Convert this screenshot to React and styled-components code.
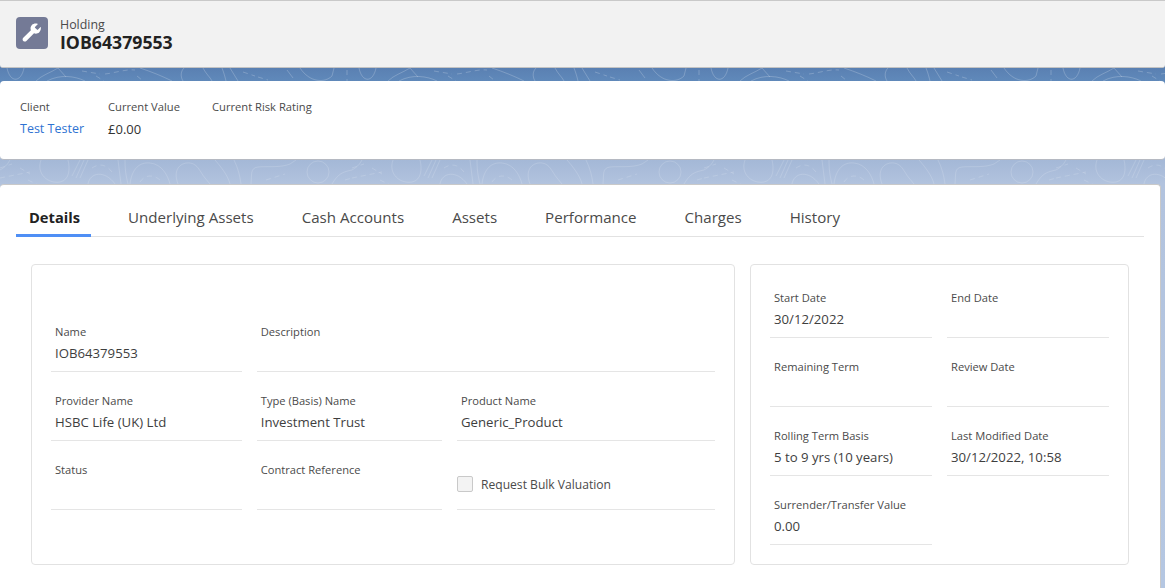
import React from "react";
import styled, { createGlobalStyle } from "styled-components";

const Global = createGlobalStyle`
  html, body { margin: 0; padding: 0; }
  body { font-family: "Open Sans", "Noto Sans", sans-serif; color: #181818; }
  * { box-sizing: border-box; }
`;

const Page = styled.div`
  width: 1165px;
  height: 588px;
  overflow: hidden;
  background: linear-gradient(180deg, #5a80b2 68px, #6089ba 81px, #a4b8d7 160px, #b2c3de 184px, #b5c7e2 588px);
  display: flex;
  flex-direction: column;
`;

const Header = styled.header`
  height: 68px;
  flex: none;
  background: #f2f2f2;
  border-top: 1px solid #c9c9c9;
  border-bottom: 1px solid #c4c4c4;
  border-radius: 0 0 3px 3px;
  padding: 16px 16px 0;
  display: flex;
  gap: 12px;
`;

const IconBox = styled.div`
  width: 32px;
  height: 32px;
  border-radius: 4px;
  background: #747a96;
  display: flex;
  align-items: center;
  justify-content: center;
`;

const HeaderText = styled.div`
  display: flex;
  flex-direction: column;
`;

const Entity = styled.div`
  font-size: 12.4px;
  line-height: 15px;
  color: #4a4a4a;
`;

const Title = styled.div`
  font-size: 17.7px;
  line-height: 20px;
  font-weight: 700;
  color: #222;
`;

const Band = styled.svg`
  display: block;
  flex: none;
  width: 1165px;
  height: ${(p) => p.$h}px;
`;

const Highlights = styled.section`
  height: 79px;
  flex: none;
  background: #fff;
  border-radius: 4px;
  border-bottom: 1px solid #b5b9c2;
  padding: 18px 20px 0;
  display: flex;
  gap: 24px;
`;

const Highlight = styled.div`
  display: flex;
  flex-direction: column;
  gap: 4px;
  padding-right: ${(p) => p.$pr || 0}px;
`;

const HighLabel = styled.div`
  font-size: 11.2px;
  line-height: 16px;
  color: #4a4a4a;
`;

const HighValue = styled.div`
  font-size: ${(p) => (p.$link ? 12.5 : 13)}px;
  line-height: 20px;
  color: ${(p) => (p.$link ? "#2e72d2" : "#333")};
`;

const Main = styled.main`
  width: 1161px;
  flex: 1;
  background: #fff;
  border-top: 1px solid #c9c9c9;
  border-right: 1px solid #c9c9c9;
  border-radius: 4px 4px 0 0;
  padding: 16px 16px 0;
`;

const Tabs = styled.nav`
  height: 36px;
  display: flex;
  border-bottom: 1px solid #e2e2e2;
`;

const Tab = styled.div`
  height: 36px;
  padding: 0 24px 4px;
  display: flex;
  align-items: center;
  font-size: 15.1px;
  line-height: 20px;
  color: #4a4a4a;
`;

const ActiveTab = styled(Tab)`
  width: 75px;
  padding: 0 0 1px 13px;
  margin-right: 13px;
  font-size: 14.7px;
  font-weight: 700;
  color: #222;
  border-bottom: 3px solid #4f8ff5;
`;

const Columns = styled.div`
  display: flex;
  gap: 15px;
  padding: 27px 0 0 15px;
`;

const Card = styled.div`
  height: 301px;
  width: ${(p) => p.$w}px;
  flex: none;
  border: 1px solid #e2e2e2;
  border-radius: 4px;
  padding: ${(p) => p.$pt}px 19px 0;
  display: grid;
  grid-template-columns: ${(p) => p.$cols};
  grid-auto-rows: 69px;
  column-gap: ${(p) => p.$gap}px;
`;

const Field = styled.div`
  border-bottom: 1px solid #e5e5e5;
  padding: 0 0 8px 4px;
  display: flex;
  flex-direction: column;
  justify-content: flex-end;
  grid-column: ${(p) => p.$span || "auto"};
`;

const Label = styled.div`
  font-size: 11.15px;
  line-height: 16px;
  color: #4a4a4a;
  margin-bottom: 3px;
`;

const Value = styled.div`
  font-size: 13.2px;
  line-height: 20px;
  height: 20px;
  color: #3e3e3e;
`;

const CheckField = styled.div`
  border-bottom: 1px solid #e5e5e5;
  display: flex;
  align-items: center;
  align-self: stretch;
  gap: 8px;
  padding-top: 34px;
  padding-bottom: 16px;
`;

const Box = styled.span`
  width: 16px;
  height: 16px;
  flex: none;
  background: #f3f3f3;
  border: 1px solid #c9c9c9;
  border-radius: 2px;
`;

const CheckLabel = styled.span`
  font-size: 12.1px;
  line-height: 18px;
  margin-top: 2px;
  color: #4a4a4a;
`;

const line1 = [
  "M7 0C10 15 21 15 24 0",
  "M36 13C42 7 50 5 58 0L66 9",
  "M47 13C60 6 75 8 85 13",
  "M140 0C152 4 162 8 172 13",
  "M183 13C180 8 181 3 184 0",
  "M203 0C206 6 210 9 212 13",
  "M222 0C224 5 225 9 226 13",
  "M230 0L238 13",
  "M287 2L293 10",
  "M300 0C310 15 325 15 332 8L334 0",
];
const dash1 = [
  "M82 3L100 6M105 6C115 5 125 1 135 2",
  "M96 8L104 13",
  "M243 4L255 8M258 9L268 12",
  "M137 8L142 12",
  "M347 2V13",
];
const line2 = [
  "M41 0C36 14 48 24 60 22C70 20 70 8 68 0",
  "M72 16L80 0M76 18L84 0M80 18L88 0",
  "M88 24C90 12 105 10 115 24",
  "M118 0C119 8 120 16 121 24",
  "M125 0C125 10 126 16 128 24",
  "M130 24C132 8 140 2 150 3C162 4 168 16 170 24",
  "M178 24C172 8 182 2 190 3C198 4 200 12 205 18L210 24",
  "M215 0C222 8 228 16 230 24",
  "M234 0C238 8 240 16 241 24",
  "M251 24C252 14 250 8 258 7C268 6 280 8 290 4L296 0",
  "M332 24C338 14 342 12 352 10",
  "M0 10C7 6 8 3 10 0",
  "M307 12a11 11 0 1 0 22 0a11 11 0 1 0 -22 0",
];
const dash2 = [
  "M0 8L12 4M20 8L30 14M28 20L38 25",
  "M92 8C98 4 105 3 112 12",
  "M140 22C145 14 155 14 162 22",
  "M266 20L285 14",
  "M345 20L352 18",
  "M0 18L30 12",
];

const Wrench = () => (
  <svg width="20" height="20" viewBox="0 0 22 22" fill="#fff">
    <path d="M21 4.600c-.1-.3-.4-.3-.6-.1l-3 3c-.2.200-.5.200-.7 0l-2.400-2.400c-.2-.2-.2-.5 0-.7l3-3c.2-.2.100-.5-.2-.6C14.800.100 12.300.600 10.900 2.100 9.300 3.700 9 6 9.800 7.900L1.400 16.300c-1 1-1 2.500 0 3.400 1 1 2.500 1 3.400 0l8.400-8.400c2 .800 4.200.400 5.800-1.200 1.500-1.500 2.100-3.800 1.600-5.500z" />
  </svg>
);

const Lines = ({ id, h, solid, dashed, opacity }) => (
  <Band $h={h} viewBox={`0 0 1165 ${h}`}>
    <defs>
      <pattern id={id} patternUnits="userSpaceOnUse" width="352" height={h}>
        <g fill="none" stroke="#fff" strokeOpacity={opacity}>
          {solid.map((d) => <path key={d} d={d} />)}
          {dashed.map((d) => <path key={d} d={d} strokeDasharray="5 4" />)}
        </g>
      </pattern>
    </defs>
    <rect width="1165" height={h} fill={`url(#${id})`} />
  </Band>
);

const left = [
  { label: "Name", value: "IOB64379553" },
  { label: "Description", span: "2 / 4" },
  { label: "Provider Name", value: "HSBC Life (UK) Ltd" },
  { label: "Type (Basis) Name", value: "Investment Trust" },
  { label: "Product Name", value: "Generic_Product" },
  { label: "Status" },
  { label: "Contract Reference" },
];
const right = [
  { label: "Start Date", value: "30/12/2022" },
  { label: "End Date" },
  { label: "Remaining Term" },
  { label: "Review Date" },
  { label: "Rolling Term Basis", value: "5 to 9 yrs (10 years)" },
  { label: "Last Modified Date", value: "30/12/2022, 10:58" },
  { label: "Surrender/Transfer Value", value: "0.00" },
];
const tabs = ["Underlying Assets", "Cash Accounts", "Assets", "Performance", "Charges", "History"];

const renderField = (f) => (
  <Field key={f.label} $span={f.span}>
    <Label>{f.label}</Label>
    <Value>{f.value}</Value>
  </Field>
);

export default function App() {
  return (
    <Page>
      <Global />
      <Header>
        <IconBox><Wrench /></IconBox>
        <HeaderText>
          <Entity>Holding</Entity>
          <Title>IOB64379553</Title>
        </HeaderText>
      </Header>
      <Lines id="contour-a" h={13} solid={line1} dashed={dash1} opacity={0.2} />
      <Highlights>
        <Highlight><HighLabel>Client</HighLabel><HighValue $link>Test Tester</HighValue></Highlight>
        <Highlight $pr={8}><HighLabel>Current Value</HighLabel><HighValue>£0.00</HighValue></Highlight>
        <Highlight><HighLabel>Current Risk Rating</HighLabel></Highlight>
      </Highlights>
      <Lines id="contour-b" h={24} solid={line2} dashed={dash2} opacity={0.15} />
      <Main>
        <Tabs>
          <ActiveTab>Details</ActiveTab>
          {tabs.map((t) => <Tab key={t}>{t}</Tab>)}
        </Tabs>
        <Columns>
          <Card $w={704} $pt={38} $gap={14.75} $cols="191px 185.5px 258px">
            {left.map(renderField)}
            <CheckField><Box /><CheckLabel>Request Bulk Valuation</CheckLabel></CheckField>
          </Card>
          <Card $w={379} $pt={4} $gap={15} $cols="162px 162px">
            {right.map(renderField)}
          </Card>
        </Columns>
      </Main>
    </Page>
  );
}
